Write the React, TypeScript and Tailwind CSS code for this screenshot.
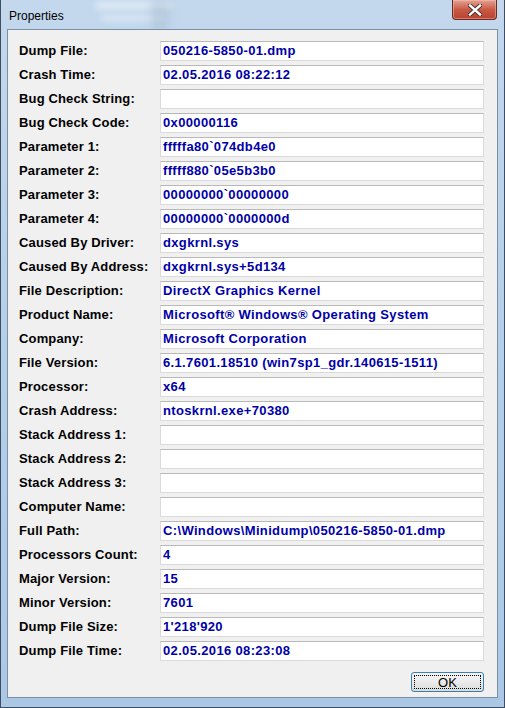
import * as React from "react"

const fields: [string, string][] = [
  ["Dump File:", "050216-5850-01.dmp"],
  ["Crash Time:", "02.05.2016 08:22:12"],
  ["Bug Check String:", ""],
  ["Bug Check Code:", "0x00000116"],
  ["Parameter 1:", "fffffa80`074db4e0"],
  ["Parameter 2:", "fffff880`05e5b3b0"],
  ["Parameter 3:", "00000000`00000000"],
  ["Parameter 4:", "00000000`0000000d"],
  ["Caused By Driver:", "dxgkrnl.sys"],
  ["Caused By Address:", "dxgkrnl.sys+5d134"],
  ["File Description:", "DirectX Graphics Kernel"],
  ["Product Name:", "Microsoft® Windows® Operating System"],
  ["Company:", "Microsoft Corporation"],
  ["File Version:", "6.1.7601.18510 (win7sp1_gdr.140615-1511)"],
  ["Processor:", "x64"],
  ["Crash Address:", "ntoskrnl.exe+70380"],
  ["Stack Address 1:", ""],
  ["Stack Address 2:", ""],
  ["Stack Address 3:", ""],
  ["Computer Name:", ""],
  ["Full Path:", "C:\\Windows\\Minidump\\050216-5850-01.dmp"],
  ["Processors Count:", "4"],
  ["Major Version:", "15"],
  ["Minor Version:", "7601"],
  ["Dump File Size:", "1'218'920"],
  ["Dump File Time:", "02.05.2016 08:23:08"],
]

function CloseButton() {
  return (
    <div className="w-[45px] h-[20px] rounded-b-[4px] border border-t-0 border-[#6b2a22] bg-gradient-to-b from-[#e3a293] via-[#c85a45] to-[#b8402f] shadow-[inset_0_0_0_1px_rgba(255,200,190,0.45)] flex items-center justify-center">
      <svg width="14" height="12" viewBox="0 0 14 12">
        <path d="M2 1.5 L12 10.5 M12 1.5 L2 10.5" stroke="#3b2a2a" strokeWidth="4.2" strokeLinecap="square" />
        <path d="M2 1.5 L12 10.5 M12 1.5 L2 10.5" stroke="#ffffff" strokeWidth="2.4" strokeLinecap="square" />
      </svg>
    </div>
  )
}

function FieldRow({ label, value }: { label: string; value: string }) {
  return (
    <div className="flex h-[20px] items-center">
      <span className="w-[141px] font-bold text-[13px] tracking-[0.15px] text-black">{label}</span>
      <div className="w-[324px] h-[20px] bg-white border border-[#dadada] border-t-[#b9b9b9] px-[2px] flex items-center">
        <span className="font-bold text-[13px] tracking-[0.35px] text-[#0000a8] whitespace-nowrap">{value}</span>
      </div>
    </div>
  )
}

export default function App() {
  return (
    <div className="relative w-[505px] h-[708px] flex flex-col overflow-hidden border-x border-b border-[#3e4e60] bg-gradient-to-b from-[#c3d8ed] via-[#b4cfea] to-[#aac8e6] font-['Liberation_Sans',Arial,sans-serif]">
      {/* blurred glass behind the title bar */}
      <div className="absolute left-[95px] top-[2px] w-[75px] h-[7px] bg-white/50 blur-[3px]" />
      <div className="absolute left-[100px] top-[15px] w-[65px] h-[6px] bg-white/40 blur-[3px]" />
      <div className="absolute left-[150px] top-[0px] w-[18px] h-[29px] bg-[#7f9ab5]/25 blur-[4px]" />

      <div className="relative h-[29px] flex items-start justify-between pl-[8px] pr-[7px]">
        <span className="mt-[7px] text-[12px] text-black">Properties</span>
        <CloseButton />
      </div>

      <div className="relative ml-[6px] w-[491px] h-[669px] border border-[#7d8fa3] bg-[#f0f0f0] flex flex-col pt-[11px] pl-[11px] pr-[13px]">
        <div className="flex flex-col gap-[4px]">
          {fields.map(([label, value]) => (
            <FieldRow key={label} label={label} value={value} />
          ))}
        </div>
        <div className="flex justify-end mt-[11px]">
          <button className="w-[73px] h-[20px] rounded-[3px] border border-[#3c7fb1] bg-gradient-to-b from-[#f4f4f4] via-[#ebebeb] to-[#d9d9d9] p-[2px]">
            <div className="w-full h-full border border-dotted border-black flex items-center justify-center text-[13px] text-black leading-none">
              OK
            </div>
          </button>
        </div>
      </div>
    </div>
  )
}
